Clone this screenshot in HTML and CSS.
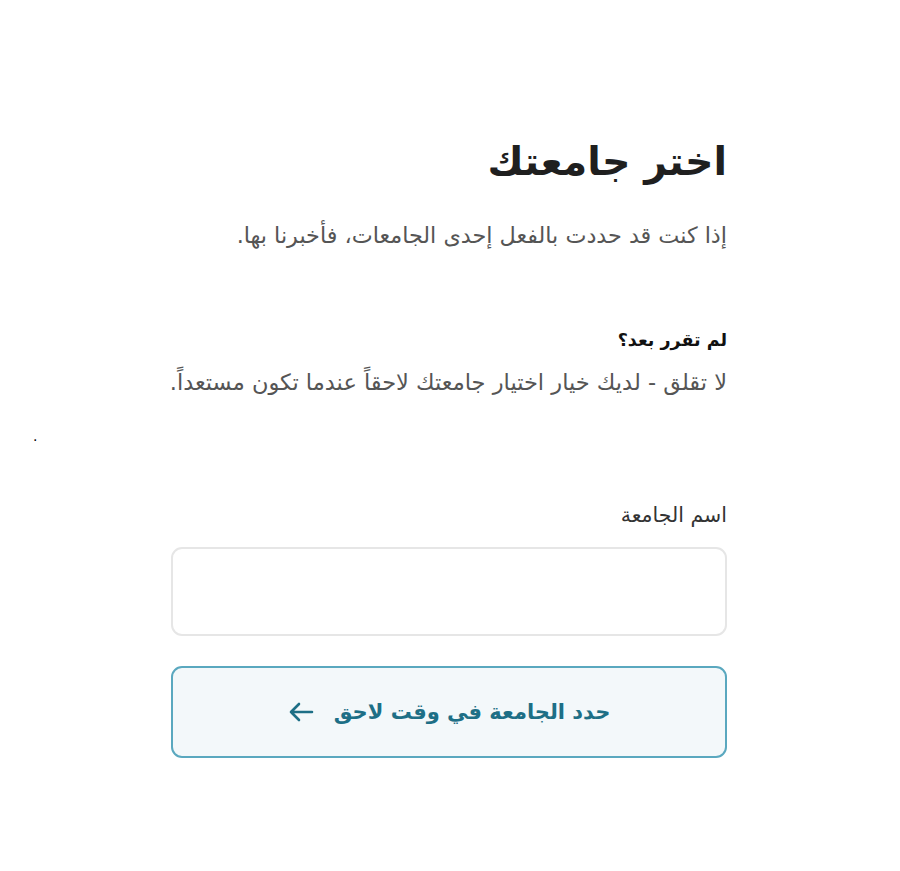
FILE: index.html
```html
<!DOCTYPE html>
<html lang="ar" dir="rtl">
<head>
<meta charset="utf-8">
<link rel="stylesheet" href="styles.css">
</head>
<body>
<span class="stray">.</span>
<main class="panel">
  <h1 class="title">اختر جامعتك</h1>
  <p class="subtitle">إذا كنت قد حددت بالفعل إحدى الجامعات، فأخبرنا بها.</p>
  <div class="note">
    <p class="note-head">لم تقرر بعد؟</p>
    <p class="note-body">لا تقلق - لديك خيار اختيار جامعتك لاحقاً عندما تكون مستعداً.</p>
  </div>
  <label class="field-label" for="uni">اسم الجامعة</label>
  <input class="field" id="uni" type="text">
  <button class="later" type="button">
    <span>حدد الجامعة في وقت لاحق</span>
    <svg class="arrow" width="26" height="20" viewBox="0 0 26 20" aria-hidden="true"><path d="M24 10H3M11 2 3 10l8 8" fill="none" stroke="currentColor" stroke-width="2.6" stroke-linecap="round" stroke-linejoin="round"/></svg>
  </button>
</main>
</body>
</html>
```
FILE: styles.css
```css
html, body {
  margin: 0;
  padding: 0;
  background: #ffffff;
}
body {
  font-family: "DejaVu Sans", "Liberation Sans", sans-serif;
  position: relative;
  min-height: 871px;
}
.stray {
  position: absolute;
  left: 33px;
  top: 428px;
  font-size: 14px;
  color: #000;
}
.panel {
  width: 556px;
  margin: 0 173px 0 0;
  padding-top: 133px;
  display: flex;
  flex-direction: column;
}
.title {
  margin: 0;
  font-size: 39.5px;
  font-weight: 700;
  color: #1f1f1f;
  line-height: 56px;
}
.subtitle {
  margin: 31px 0 0;
  font-size: 22.3px;
  color: #555;
  line-height: 30px;
}
.note {
  margin-top: 77px;
}
.note-head {
  margin: 0;
  font-size: 17.5px;
  font-weight: 700;
  color: #111;
  line-height: 26px;
}
.note-body {
  margin: 14px 0 0;
  font-size: 22.5px;
  color: #555;
  line-height: 30px;
  white-space: nowrap;
}
.field-label {
  margin-top: 104px;
  font-size: 20.5px;
  color: #333;
  line-height: 28px;
}
.field {
  margin-top: 18px;
  height: 89px;
  box-sizing: border-box;
  border: 2px solid #e6e6e6;
  border-radius: 11px;
  background: #fff;
  outline: none;
}
.later {
  margin-top: 30px;
  height: 92px;
  box-sizing: border-box;
  border: 2px solid #5aa8bf;
  border-radius: 11px;
  background: #f3f8fa;
  color: #1d6f86;
  font-family: inherit;
  font-size: 21px;
  font-weight: 700;
  display: flex;
  align-items: center;
  justify-content: center;
  gap: 20px;
  cursor: pointer;
}
.arrow {
  display: block;
}
```
